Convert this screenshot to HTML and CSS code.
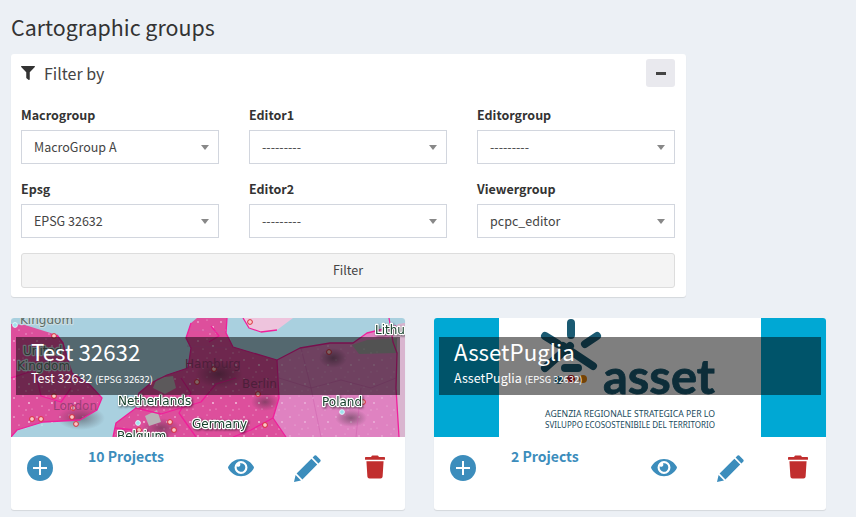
FILE: index.html
```html
<!DOCTYPE html>
<html>
  <head>
    <meta name="viewport" content="width=device-width, initial-scale=1">
    <title>Cartographic groups</title>
    <link rel="stylesheet" href="styles.css">
  </head>
  <body>
    <h1 class="page-title">Cartographic groups</h1>

    <section class="filter-box">
      <div class="filter-head">
        <svg class="filter-icon" viewBox="0 0 512 512"><path d="M487.976 0H24.028C2.71 0-8.047 25.866 7.058 40.971L192 225.941V432c0 7.831 3.821 15.17 10.237 19.662l80 55.98C298.02 518.69 320 507.493 320 487.98V225.941l184.947-184.97C520.021 25.896 509.338 0 487.976 0z"/></svg>
        <span class="filter-title">Filter by</span>
        <button class="collapse-btn"><span class="minus"></span></button>
      </div>
      <div class="filter-grid">
        <div class="field"><label>Macrogroup</label><div class="select"><span>MacroGroup A</span><i class="caret"></i></div></div>
        <div class="field"><label>Editor1</label><div class="select"><span>---------</span><i class="caret"></i></div></div>
        <div class="field"><label>Editorgroup</label><div class="select"><span>---------</span><i class="caret"></i></div></div>
        <div class="field"><label>Epsg</label><div class="select"><span>EPSG 32632</span><i class="caret"></i></div></div>
        <div class="field"><label>Editor2</label><div class="select"><span>---------</span><i class="caret"></i></div></div>
        <div class="field"><label>Viewergroup</label><div class="select"><span>pcpc_editor</span><i class="caret"></i></div></div>
      </div>
      <button class="filter-btn">Filter</button>
    </section>

    <div class="group-list">
      <article class="group-card">
        <div class="thumb">
          <svg class="thumb-art" viewBox="0 0 394 119" width="394" height="119">
            <defs>
              <pattern id="speck" width="23" height="19" patternUnits="userSpaceOnUse">
                <circle cx="3" cy="4" r=".8" fill="#fff" opacity=".75"/>
                <circle cx="12" cy="2" r=".6" fill="#fff" opacity=".6"/>
                <circle cx="18" cy="9" r=".9" fill="#fff" opacity=".7"/>
                <circle cx="8" cy="12" r=".6" fill="#fff" opacity=".8"/>
                <circle cx="15" cy="16" r=".7" fill="#fff" opacity=".55"/>
                <circle cx="21" cy="15" r=".5" fill="#fff" opacity=".7"/>
              </pattern>
              <radialGradient id="shade">
                <stop offset="0" stop-color="#3a3038" stop-opacity=".5"/>
                <stop offset="1" stop-color="#3a3038" stop-opacity="0"/>
              </radialGradient>
            </defs>
            <rect width="394" height="119" fill="#a9d0df"/>
            <path class="land-uk" d="M0 6L14 7L30 12L46 17L52 25L56 39L61 55L79 67L91 80L86 92L69 102L32 104L6 112L0 119Z"/>
            <path class="land-west" d="M102 119L105 105L125 90L128 75L140 65L156 57L177 50L180 30L175 20L180 5L186 0L216 0L215 15L222 29L242 35L266 42L268 80L262 100L275 119Z"/>
            <path class="land-east" d="M266 42L289 30L319 25L342 25L356 15L385 8L394 5L394 119L275 119L262 100L268 80Z"/>
            <path class="land-far" d="M387 6L394 5L394 119L388 119L385 70L386 35L378 20Z"/>
            <path class="land-grey" d="M341 27L356 22L386 20L386 35L348 36Z"/>
            <path class="land-north" d="M232 0L238 10L250 14L266 12L282 0Z"/>
            <path fill="url(#speck)" d="M0 6L46 17L61 55L91 80L69 102L6 112L0 119Z"/>
            <path fill="url(#speck)" d="M102 119L125 90L156 57L177 50L186 0L216 0L222 29L266 42L268 80L262 100L275 119Z"/>
            <path fill="url(#speck)" opacity=".6" d="M266 42L319 25L342 25L385 38L385 119L275 119L262 100L268 80Z"/>
            <ellipse cx="150" cy="110" rx="20" ry="10" fill="url(#shade)"/>
            <ellipse cx="70" cy="100" rx="24" ry="12" fill="url(#shade)"/>
            <ellipse cx="208" cy="56" rx="24" ry="14" fill="url(#shade)"/>
            <ellipse cx="254" cy="84" rx="14" ry="9" fill="url(#shade)"/>
            <ellipse cx="322" cy="40" rx="14" ry="10" fill="url(#shade)"/>
            <ellipse cx="340" cy="100" rx="16" ry="9" fill="url(#shade)"/>
            <path class="sea-patch" d="M146 60L162 58L165 70L154 76L142 70Z"/>
            <path class="sea-patch" d="M134 98L146 92L150 104L138 108Z"/>
            <path class="border" d="M46 17L52 25L56 39L61 55L79 67L91 80L86 92L69 102L32 104L6 112L0 119"/>
            <path class="border" d="M102 119L105 105L125 90L128 75L140 65L156 57L177 50L180 30L175 20L180 5"/>
            <path class="border" d="M216 0L215 15L222 29L242 35L266 42L289 30L319 25L342 25L356 15L385 8"/>
            <path class="border" d="M266 42L268 80L262 100L275 119M125 90L150 96L190 84L205 66L225 60M170 60L180 75L168 95L185 119"/>
            <path class="border" d="M378 0L382 24L386 35L385 70L388 119M232 0L238 10L250 14L266 12M200 8L208 18L198 24"/>
            <path class="border" d="M0 60L24 52L30 78L50 84L60 70M104 110L124 112L144 119"/>
            <path class="border" d="M262 100L240 112L222 119"/>
            <path class="border-thin" d="M268 60L300 70L330 62L360 70L385 60M300 70L310 119M290 30L300 70M350 70L345 119"/>
            <path class="border-thin" d="M14 20L30 34L20 46M180 12L214 14M176 28L220 30"/>
            <circle class="town" cx="239" cy="4" r="2.4"/><circle class="town" cx="43" cy="18" r="2.4"/>
            <circle class="town" cx="43" cy="78" r="2.4"/><circle class="town" cx="62" cy="90" r="2.4"/>
            <circle class="town" cx="21" cy="101" r="2.4"/><circle class="town" cx="30" cy="101" r="2.4"/>
            <circle class="town" cx="61" cy="99" r="2.4"/><circle class="town" cx="65" cy="106" r="2.4"/>
            <circle class="town" cx="159" cy="104" r="2.4"/><circle class="town" cx="163" cy="112" r="2.4"/>
            <circle class="town" cx="254" cy="107" r="2.4"/><circle class="town" cx="128" cy="112" r="2.4"/>
            <circle class="town" cx="352" cy="84" r="2.4"/><circle class="town" cx="318" cy="34" r="2.4"/>
            <circle class="town" cx="203" cy="51" r="2.4"/><circle class="town" cx="186" cy="64" r="2.4"/>
            <circle class="town" cx="247" cy="76" r="2.4"/>
            <circle class="port" cx="4" cy="7" r="2.4"/><circle class="port" cx="127" cy="105" r="2.4"/>
            <circle class="port" cx="331" cy="94" r="2.4"/><circle class="port" cx="127" cy="87" r="2.4"/>
            <text class="place place-faint" x="9" y="6">Kingdom</text>
            <text class="place place-faint" x="12" y="37">United</text>
            <text class="place place-faint" x="6" y="52">Kingdom</text>
            <text class="place-dark" x="42" y="92">London</text>
            <text class="place-dark" x="174" y="50">Hamburg</text>
            <text class="place-dark" x="231" y="70">Berlin</text>
            <text class="place" x="107" y="87">Netherlands</text>
            <text class="place" x="181" y="110">Germany</text>
            <text class="place" x="311" y="88">Poland</text>
            <text class="place" x="106" y="122">Belgium</text>
            <text class="place" x="364" y="16">Lithuania</text>
          </svg>
          <div class="thumb-label">
            <div class="thumb-name">Test 32632</div>
            <div class="thumb-sub">Test 32632 <small>(EPSG 32632)</small></div>
          </div>
        </div>
        <div class="card-actions">
          <svg class="add-icon" viewBox="0 0 26 26"><circle cx="13" cy="13" r="13"/><path d="M13 6v14M6 13h14"/></svg>
          <a class="project-count">10 Projects</a>
          <svg class="eye-icon" viewBox="0 0 576 512"><path d="M572.52 241.4C518.29 135.59 410.93 64 288 64S57.68 135.64 3.48 241.41a32.35 32.35 0 0 0 0 29.19C57.71 376.41 165.07 448 288 448s230.32-71.64 284.52-177.41a32.35 32.35 0 0 0 0-29.19zM288 400a144 144 0 1 1 144-144 143.93 143.93 0 0 1-144 144zm0-240a95.31 95.31 0 0 0-25.31 3.79 47.85 47.85 0 0 1-66.9 66.9A95.78 95.78 0 1 0 288 160z"/></svg>
          <svg class="pencil-icon" viewBox="0 0 27 27"><path d="M0 27L1.6 20L7 25.4ZM2.6 18.6L17.4 3.8L23.2 9.6L8.4 24.4ZM18.6 2.6L20.6.6Q21.4 0 22.2.6L26.4 4.8Q27 5.6 26.4 6.4L24.4 8.4Z"/></svg>
          <svg class="trash-icon" viewBox="0 0 448 512"><path d="M432 32H312l-9.4-18.7A24 24 0 0 0 281.1 0H166.8a23.72 23.72 0 0 0-21.4 13.3L136 32H16A16 16 0 0 0 0 48v32a16 16 0 0 0 16 16h416a16 16 0 0 0 16-16V48a16 16 0 0 0-16-16zM53.2 467a48 48 0 0 0 47.9 45h245.8a48 48 0 0 0 47.9-45L416 128H32z"/></svg>
        </div>
      </article>

      <article class="group-card">
        <div class="thumb">
          <svg class="thumb-art" viewBox="0 0 392 119" width="392" height="119">
            <rect width="392" height="119" fill="#fff"/>
            <rect width="65" height="119" fill="#00a8d4"/>
            <rect x="327" width="65" height="119" fill="#00a8d4"/>
            <g class="logo-spokes">
              <path d="M137 5V17M163 18L151 26M111 18L124 26M129 28L159 48M136 28L111 50M131 50H144"/>
            </g>
            <circle cx="125" cy="62" r="4" fill="#1f6d8a"/>
            <circle cx="137" cy="61" r="4" fill="#c01622"/>
            <circle cx="149" cy="61" r="4" fill="#e9860c"/>
            <text class="logo-word" x="169" y="76" textLength="112" lengthAdjust="spacingAndGlyphs">asset</text>
            <text class="logo-line" x="111" y="99" textLength="170" lengthAdjust="spacingAndGlyphs">AGENZIA REGIONALE STRATEGICA PER LO</text>
            <text class="logo-line" x="111" y="110" textLength="170" lengthAdjust="spacingAndGlyphs">SVILUPPO ECOSOSTENIBILE DEL TERRITORIO</text>
          </svg>
          <div class="thumb-label">
            <div class="thumb-name">AssetPuglia</div>
            <div class="thumb-sub">AssetPuglia <small>(EPSG 32632)</small></div>
          </div>
        </div>
        <div class="card-actions">
          <svg class="add-icon" viewBox="0 0 26 26"><circle cx="13" cy="13" r="13"/><path d="M13 6v14M6 13h14"/></svg>
          <a class="project-count">2 Projects</a>
          <svg class="eye-icon" viewBox="0 0 576 512"><path d="M572.52 241.4C518.29 135.59 410.93 64 288 64S57.68 135.64 3.48 241.41a32.35 32.35 0 0 0 0 29.19C57.71 376.41 165.07 448 288 448s230.32-71.64 284.52-177.41a32.35 32.35 0 0 0 0-29.19zM288 400a144 144 0 1 1 144-144 143.93 143.93 0 0 1-144 144zm0-240a95.31 95.31 0 0 0-25.31 3.79 47.85 47.85 0 0 1-66.9 66.9A95.78 95.78 0 1 0 288 160z"/></svg>
          <svg class="pencil-icon" viewBox="0 0 27 27"><path d="M0 27L1.6 20L7 25.4ZM2.6 18.6L17.4 3.8L23.2 9.6L8.4 24.4ZM18.6 2.6L20.6.6Q21.4 0 22.2.6L26.4 4.8Q27 5.6 26.4 6.4L24.4 8.4Z"/></svg>
          <svg class="trash-icon" viewBox="0 0 448 512"><path d="M432 32H312l-9.4-18.7A24 24 0 0 0 281.1 0H166.8a23.72 23.72 0 0 0-21.4 13.3L136 32H16A16 16 0 0 0 0 48v32a16 16 0 0 0 16 16h416a16 16 0 0 0 16-16V48a16 16 0 0 0-16-16zM53.2 467a48 48 0 0 0 47.9 45h245.8a48 48 0 0 0 47.9-45L416 128H32z"/></svg>
        </div>
      </article>
    </div>
  </body>
</html>
```

FILE: styles.css
```css
html, body { height: 517px; overflow: hidden; }
body {
  margin: 0;
  padding: 0 11px;
  background: #ecf0f5;
  color: #333;
  font-family: "Noto Sans CJK SC", "Noto Sans", sans-serif;
  font-size: 12.5px;
}

.page-title {
  margin: 0;
  height: 54px;
  font-size: 21.4px;
  font-weight: 400;
  line-height: 54px;
}

/* filter box */
.filter-box {
  width: 675px;
  box-sizing: border-box;
  height: 243px;
  padding: 5px 11px 0 10px;
  background: #fff;
  border-radius: 3px;
  box-shadow: 0 1px 1px rgba(0, 0, 0, .1);
}
.filter-head { display: flex; align-items: center; height: 28px; margin-bottom: 18px; }
.filter-icon { width: 14px; height: 14px; fill: #333; margin-right: 9px; }
.filter-title { font-size: 16px; line-height: 28px; color: #444; }
.collapse-btn {
  margin-left: auto;
  width: 29px;
  height: 28px;
  padding: 0;
  border: none;
  border-radius: 3px;
  background: #e9e9ee;
  display: flex;
  align-items: center;
  justify-content: center;
}
.minus { display: block; width: 10px; height: 3px; background: #444; }

.filter-grid {
  display: grid;
  grid-template-columns: repeat(3, 198px);
  column-gap: 30px;
  row-gap: 15px;
}
.field label {
  display: block;
  height: 20px;
  margin-bottom: 5px;
  font-weight: 700;
  line-height: 20px;
}
.select {
  display: flex;
  align-items: center;
  justify-content: space-between;
  box-sizing: border-box;
  height: 34px;
  padding: 0 9px 0 12px;
  border: 1px solid #d2d6de;
  color: #444;
}
.select span { margin-top: -2px; }
.caret {
  width: 0;
  height: 0;
  border-left: 4px solid transparent;
  border-right: 4px solid transparent;
  border-top: 5px solid #888;
}
.filter-btn {
  display: block;
  width: 100%;
  height: 35px;
  margin-top: 15px;
  padding: 0 0 2px;
  border: 1px solid #ddd;
  border-radius: 3px;
  background: #f4f4f4;
  color: #444;
  font: inherit;
}

/* group cards */
.group-list {
  display: grid;
  grid-template-columns: 394px 392px;
  column-gap: 29px;
  margin-top: 21px;
}
.group-card {
  height: 192px;
  background: #fff;
  border-radius: 3px;
  box-shadow: 0 1px 1px rgba(0, 0, 0, .1);
  overflow: hidden;
}
.thumb { position: relative; height: 119px; overflow: hidden; }
.thumb-art { display: block; }
.thumb-label {
  position: absolute;
  left: 5px;
  right: 5px;
  top: 19px;
  height: 58px;
  padding-left: 15px;
  background: rgba(0, 0, 0, .5);
  color: #fff;
}
.thumb-name { font-size: 22.3px; line-height: 29px; }
.thumb-sub { font-size: 12.5px; line-height: 20px; margin-top: 2px; }
.thumb-sub small { font-size: 9.4px; }

.card-actions {
  display: grid;
  grid-template-columns: 61px 140px 66px 71px 20px;
  padding: 8px 0 0 16px;
  align-items: start;
}
.project-count { color: #3c8dbc; font-size: 14px; font-weight: 700; line-height: 22px; }
.add-icon { width: 26px; height: 26px; margin-top: 10px; }
.add-icon circle { fill: #3c8dbc; }
.add-icon path { stroke: #fff; stroke-width: 2; fill: none; }
.eye-icon { width: 26px; height: 23px; margin-top: 11px; fill: #3c8dbc; }
.pencil-icon { width: 27px; height: 27px; margin-top: 10px; fill: #3c8dbc; }
.trash-icon { width: 20px; height: 24px; margin-top: 10px; fill: #c12e2e; }

/* map thumbnail */
.land-uk, .land-west { fill: #dd4f9c; }
.land-east { fill: #df82c1; }
.land-far { fill: #d9b5cf; }
.land-grey { fill: #a5a5a5; }
.land-north { fill: #eec4dd; }
.sea-patch { fill: #b8b2b6; }
.border { fill: none; stroke: #f01f9b; stroke-width: 1.3; stroke-linejoin: round; }
.border-thin { fill: none; stroke: #c95aa8; stroke-width: .6; opacity: .7; }
.town { fill: #f7c9c9; stroke: #d8202c; stroke-width: .9; }
.port { fill: #9fe3ef; stroke: #e9f8fb; stroke-width: .9; }
.place {
  font-family: "DejaVu Sans", sans-serif;
  font-size: 12px;
  fill: #17402c;
  stroke: #fff;
  stroke-width: 2.4px;
  paint-order: stroke;
  stroke-linejoin: round;
  filter: drop-shadow(1px 1px 1px rgba(0, 0, 0, .55));
}
.place-faint { fill: #5d6d66; stroke: #c9dce2; filter: none; }
.place-dark { font-family: "DejaVu Sans", sans-serif; font-size: 12px; fill: #9b3e75; }

/* logo thumbnail */
.logo-spokes path { fill: none; stroke: #1a5a72; stroke-width: 8; stroke-linecap: round; }
.logo-word { font-family: Lato, sans-serif; font-size: 48px; font-weight: 700; fill: #1a5a72; stroke: #1a5a72; stroke-width: .8px; }
.logo-line { font-family: "Noto Sans", sans-serif; font-size: 8.5px; fill: #1a4a5c; }
```
